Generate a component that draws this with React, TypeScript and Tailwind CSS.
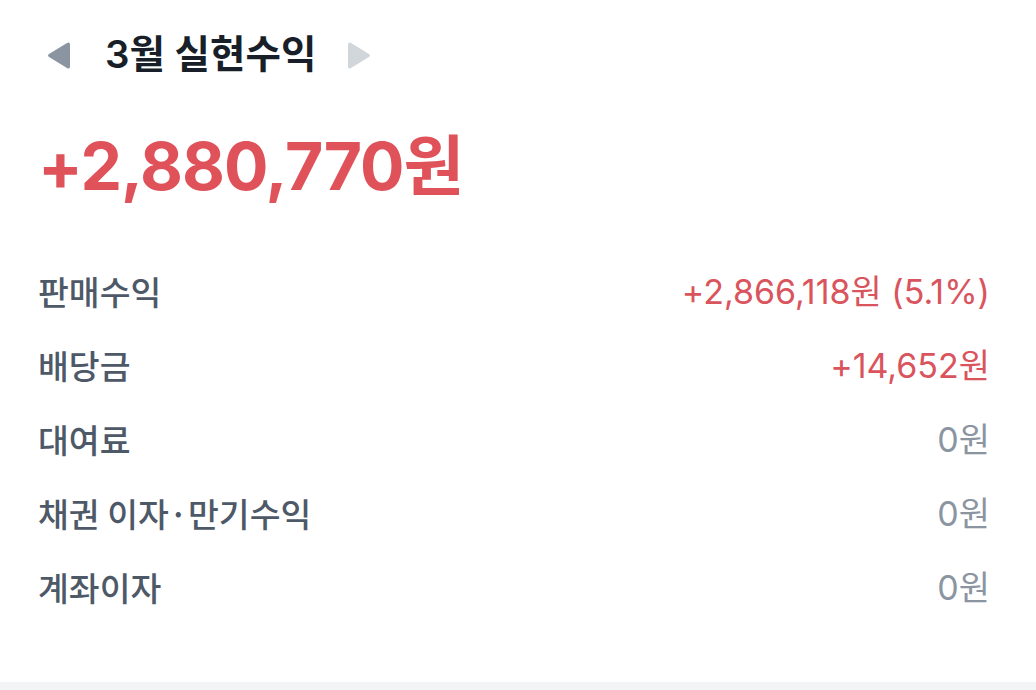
const rows = [
  { label: "판매수익", value: "+2,866,118원 (5.1%)", positive: true },
  { label: "배당금", value: "+14,652원", positive: true },
  { label: "대여료", value: "0원", positive: false },
  { label: "채권 이자·만기수익", value: "0원", positive: false },
  { label: "계좌이자", value: "0원", positive: false },
];

const font = "font-['Inter','Noto_Sans_CJK_KR',sans-serif]";

export default function App() {
  return (
    <div className={`flex h-[690px] w-[1036px] flex-col bg-white ${font}`}>
      <div className="flex-1 pl-[38px] pr-[46px] pt-[34px]">
        <div className="flex h-[42px] items-center">
          <svg width="26" height="29" viewBox="0 0 26 28" className="ml-[8px]">
            <path d="M24 3 L24 25 Q24 28 21 26.5 L3 15.5 Q1 14 3 12.5 L21 1.5 Q24 0 24 3 Z" fill="#8b95a1" />
          </svg>
          <span className="ml-[33px] text-[38.5px] font-semibold text-[#191f28]">3월 실현수익</span>
          <svg width="26" height="29" viewBox="0 0 26 28" className="ml-[30px]">
            <path d="M2 3 L2 25 Q2 28 5 26.5 L23 15.5 Q25 14 23 12.5 L5 1.5 Q2 0 2 3 Z" fill="#d1d6db" />
          </svg>
        </div>
        <div className="mt-[50px] text-[66px] font-bold leading-[80px] tracking-[-1px] text-[#e0525a]">+2,880,770원</div>
        <div className="mt-[48px] flex flex-col">
          {rows.map((r) => (
            <div key={r.label} className="flex h-[74px] items-center justify-between">
              <span className="font-['Noto_Sans_CJK_KR',sans-serif] text-[33.5px] font-medium text-[#4e5968]">{r.label}</span>
              <span className={`text-[34px] ${r.positive ? "text-[#d9545c]" : "text-[#8b95a1]"}`}>{r.value}</span>
            </div>
          ))}
        </div>
      </div>
      <div className="h-[8px] bg-[#f2f4f6]" />
    </div>
  );
}
